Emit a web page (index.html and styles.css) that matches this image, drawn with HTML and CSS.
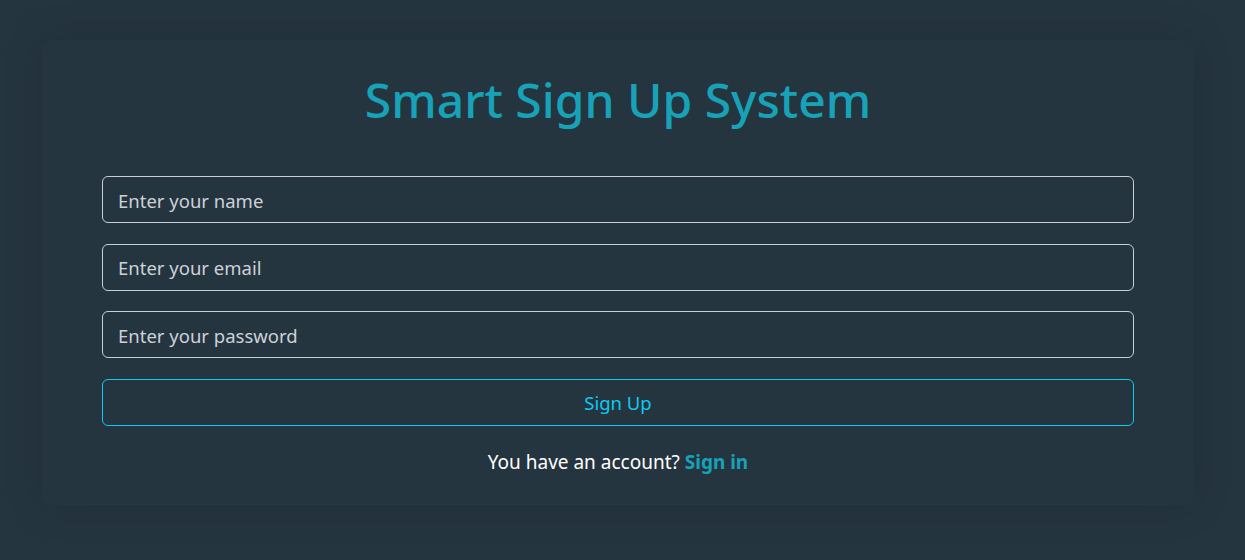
FILE: index.html
```html
<!DOCTYPE html>
<html lang="en">
<head>
<meta charset="utf-8">
<title>Smart Sign Up System</title>
<link rel="stylesheet" href="styles.css">
</head>
<body>
  <main class="page">
    <section class="card">
      <h1 class="title">Smart Sign Up System</h1>
      <form class="form">
        <input class="field" type="text" placeholder="Enter your name">
        <input class="field" type="email" placeholder="Enter your email">
        <input class="field" type="password" placeholder="Enter your password">
        <button class="btn" type="button">Sign Up</button>
      </form>
      <p class="footer">You have an account? <a class="link" href="#">Sign in</a></p>
    </section>
  </main>
</body>
</html>
```
FILE: styles.css
```css
* { box-sizing: border-box; }
html, body { margin: 0; height: 100%; }
body {
  background: #253540;
  font-family: "Noto Sans", "Open Sans", sans-serif;
  color: #fff;
}
.page {
  padding: 40px 0 0 42px;
}
.card {
  width: 1152px;
  height: 465px;
  background: #253540;
  border-radius: 8px;
  box-shadow: 0 0 40px rgba(0, 0, 0, 0.16);
  padding: 26px 60px 0;
}
.title {
  margin: 0;
  text-align: center;
  color: #17a2b8;
  font-weight: 500;
  font-size: 48px;
  line-height: 68px;
}
.form {
  display: flex;
  flex-direction: column;
  gap: 20.5px;
  margin-top: 42px;
}
.field, .btn {
  display: block;
  width: 100%;
  height: 47px;
  border-radius: 6px;
  font-family: inherit;
  font-size: 18.5px;
  background: transparent;
  outline: none;
}
.field {
  border: 1px solid #c9ced3;
  padding: 1px 15px 0;
  color: #dde2e6;
}
.field::placeholder { color: #ccd2d7; opacity: 1; }
.btn {
  border: 1px solid #0dcaf0;
  color: #0dcaf0;
  padding-top: 1px;
  cursor: pointer;
}
.footer {
  margin: 22px 0 0;
  text-align: center;
  font-size: 19px;
  line-height: 28px;
}
.link {
  color: #17a2b8;
  font-weight: 700;
  text-decoration: none;
}
```
